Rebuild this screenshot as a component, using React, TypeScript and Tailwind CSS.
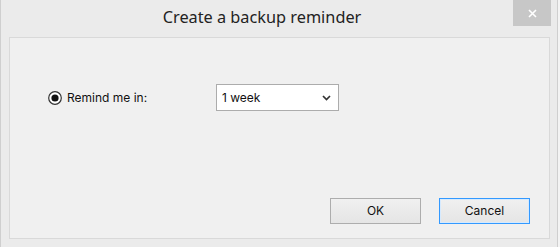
import React from "react";

export default function App() {
  const font = { fontFamily: 'Inter, "Noto Sans", sans-serif' };
  return (
    <div className="w-[560px] h-[247px] bg-[#f4f4f4]" style={font}>
      <div className="w-[558px] h-[247px] border-l border-r border-[#cfcfcf] bg-[#ebebeb] flex flex-col">
        <div className="h-[37px] flex items-start">
          <div className="flex-1 h-full flex items-center justify-center pl-[10px] pb-[2px]">
            <span className="text-[16.3px] text-[#222222] leading-none" style={{ fontFamily: '"Noto Sans", sans-serif' }}>Create a backup reminder</span>
          </div>
          <div className="w-[38px] h-[26px] bg-[#c7c7c7] flex items-center justify-center mr-[6px]">
            <svg width="9" height="9" viewBox="0 0 9 9">
              <path d="M1 1 L8 8 M8 1 L1 8" stroke="#ffffff" strokeWidth="1.6" />
            </svg>
          </div>
        </div>
        <div className="ml-[8px] w-[541px] h-[202px] border border-[#d9d9d9] bg-[#f0f0f0] flex flex-col">
          <div className="mt-[46px] h-[27px] flex items-center">
            <div className="ml-[38px] w-[168px] flex items-center gap-[5px]">
              <svg width="14" height="14" viewBox="0 0 14 14">
                <circle cx="7" cy="7" r="6.3" fill="#ffffff" stroke="#333333" strokeWidth="1.2" />
                <circle cx="7" cy="7" r="3.6" fill="#111111" />
              </svg>
              <span className="text-[12px] text-[#111111] leading-none">Remind me in:</span>
            </div>
            <div className="w-[123px] h-[27px] border border-[#acacac] bg-white flex items-center justify-between pl-[5px] pr-[7px]">
              <span className="text-[12px] text-[#111111] leading-none">1 week</span>
              <svg width="9" height="6" viewBox="0 0 9 6">
                <path d="M1 1 L4.5 4.5 L8 1" stroke="#333333" strokeWidth="1.7" fill="none" />
              </svg>
            </div>
          </div>
          <div className="flex-1" />
          <div className="flex justify-end gap-[18px] pr-[19px] mb-[14px]">
            <div className="w-[91px] h-[26px] border border-[#adadad] bg-gradient-to-b from-[#f0f0f0] to-[#e5e5e5] flex items-center justify-center">
              <span className="text-[12px] text-[#111111] leading-none">OK</span>
            </div>
            <div className="w-[91px] h-[26px] border border-[#3399ff] shadow-[inset_0_0_0_1px_#d6eafe] bg-gradient-to-b from-[#f0f0f0] to-[#e5e5e5] flex items-center justify-center">
              <span className="text-[12px] text-[#111111] leading-none">Cancel</span>
            </div>
          </div>
        </div>
      </div>
    </div>
  );
}
